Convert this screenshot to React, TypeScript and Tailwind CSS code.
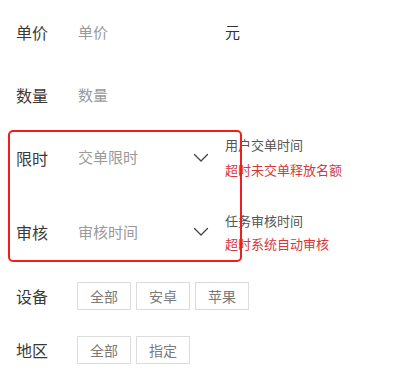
import React from "react";

const font = { fontFamily: '"Noto Sans CJK SC", "Noto Sans", sans-serif' };

function Chevron() {
  return (
    <svg width="16" height="10" viewBox="0 0 16 10" className="shrink-0">
      <path d="M1.5 1.5 L8 8 L14.5 1.5" fill="none" stroke="#444" strokeWidth="1.3" strokeLinecap="round" strokeLinejoin="round" />
    </svg>
  );
}

function Tag({ children }: { children: React.ReactNode }) {
  return (
    <div className="w-[54px] h-[28px] border border-[#dcdcdc] flex items-center justify-center text-[14px] text-[#7a7a7a] leading-none">
      {children}
    </div>
  );
}

export default function App() {
  return (
    <div className="relative w-[400px] h-[377px] bg-white overflow-hidden" style={font}>
      <div className="flex flex-col">
        <div className="h-[64px] flex items-center pl-[16px]">
          <div className="w-[62px] text-[16px] text-[#3a3a3a]">单价</div>
          <div className="w-[147px] text-[15px] text-[#9a9a9a]">单价</div>
          <div className="text-[15px] text-[#333]">元</div>
        </div>
        <div className="h-[62px] flex items-center pl-[16px]">
          <div className="w-[62px] text-[16px] text-[#3a3a3a]">数量</div>
          <div className="text-[15px] text-[#9a9a9a]">数量</div>
        </div>
        <div className="h-[63px] flex items-center pl-[16px]">
          <div className="w-[62px] text-[16px] text-[#3a3a3a]">限时</div>
          <div className="w-[115px] text-[15px] text-[#9a9a9a]">交单限时</div>
          <Chevron />
          <div className="ml-[16px] flex flex-col gap-[7px] text-[13px] leading-[18px]">
            <div className="text-[#555]">用户交单时间</div>
            <div className="text-[#d3383c]">超时未交单释放名额</div>
          </div>
        </div>
        <div className="h-[86px] flex items-center pl-[16px]">
          <div className="w-[62px] text-[16px] text-[#3a3a3a]">审核</div>
          <div className="w-[115px] text-[15px] text-[#9a9a9a]">审核时间</div>
          <Chevron />
          <div className="ml-[16px] flex flex-col gap-[5px] text-[13px] leading-[18px]">
            <div className="text-[#555]">任务审核时间</div>
            <div className="text-[#d3383c]">超时系统自动审核</div>
          </div>
        </div>
        <div className="h-[42px] flex items-center pl-[16px]">
          <div className="w-[61px] text-[16px] text-[#3a3a3a]">设备</div>
          <div className="flex gap-[5px]">
            <Tag>全部</Tag>
            <Tag>安卓</Tag>
            <Tag>苹果</Tag>
          </div>
        </div>
        <div className="h-[66px] flex items-center pl-[16px]">
          <div className="w-[61px] text-[16px] text-[#3a3a3a]">地区</div>
          <div className="flex gap-[5px]">
            <Tag>全部</Tag>
            <Tag>指定</Tag>
          </div>
        </div>
      </div>
      <div className="absolute left-[8px] top-[130px] w-[234px] h-[132px] border-[2.5px] border-[#f01d1d] rounded-[5px]" />
    </div>
  );
}
